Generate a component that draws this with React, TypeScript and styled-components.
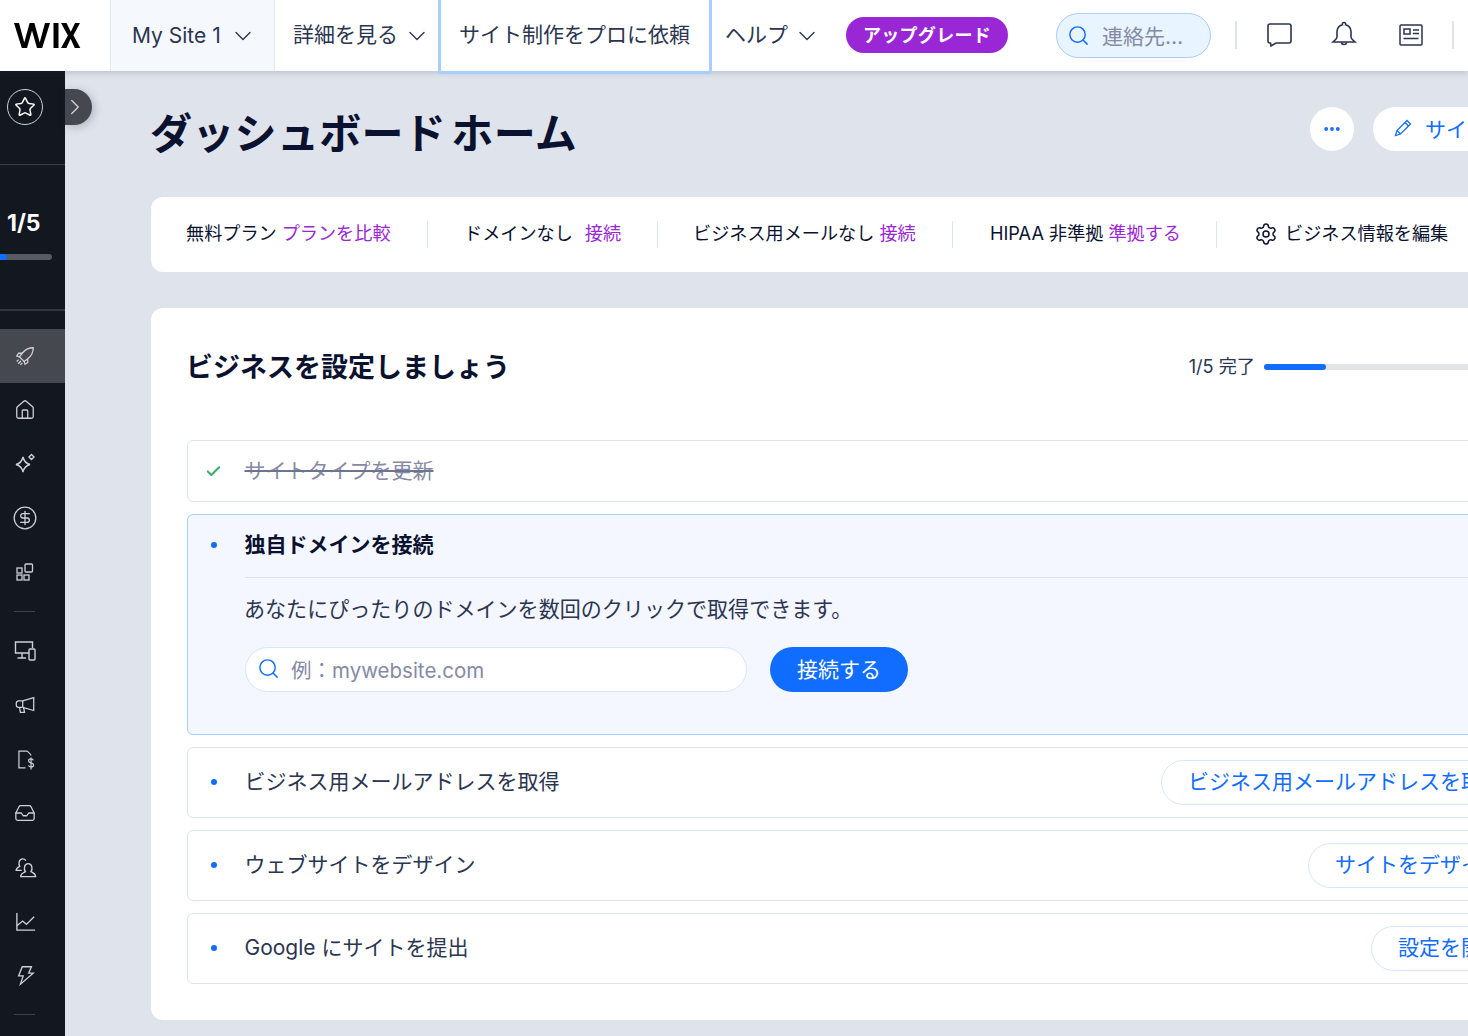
import React from "react";
import styled, { createGlobalStyle } from "styled-components";
import {
  Check,
  ChevronDown,
  ChevronRight,
  CircleDollarSign,
  Ellipsis,
  Home,
  Inbox,
  Search,
  Settings,
  Star,
} from "lucide-react";

const ink = "#0a1230";
const blue = "#116dff";
const purple = "#9a27d5";
const fontStack = `Inter, "Noto Sans CJK JP", sans-serif`;

const GlobalStyle = createGlobalStyle`
  html, body {
    margin: 0;
    height: 1036px;
    overflow: hidden;
    background: #dfe3ec;
    font-family: ${fontStack};
    color: ${ink};
  }
  * { box-sizing: border-box; }
  svg { flex: none; }
`;

const Shell = styled.div`
  width: 1468px;
  height: 1036px;
  overflow: hidden;
  position: relative;
`;

const Header = styled.header`
  height: 71px;
  display: flex;
  background: #fff;
  box-shadow: 0 2px 6px rgba(22, 45, 61, 0.18);
  position: relative;
  z-index: 2;
`;

const LogoCell = styled.div`
  width: 110px;
  padding-left: 14px;
  display: flex;
  align-items: center;
`;

const SiteTab = styled.div`
  width: 165px;
  background: #f5f9fe;
  border-left: 1px solid #e4e8ef;
  border-right: 1px solid #e4e8ef;
  padding-left: 21px;
  display: flex;
  align-items: center;
  gap: 8px;
  font-size: 21px;
  color: #2b3550;
`;

const NavMenu = styled.div<{ $width: number; $pad: number }>`
  width: ${(p) => p.$width}px;
  padding-left: ${(p) => p.$pad}px;
  display: flex;
  align-items: center;
  gap: 5px;
  font-size: 21px;
  color: #2b3550;
  white-space: nowrap;
`;

const NavLabel = styled.span`
  margin-bottom: 6px;
`;

const FocusedNav = styled.div`
  width: 274px;
  height: 77px;
  margin-top: -3px;
  padding: 0 0 6px 18px;
  border: 3px solid #a8cdff;
  border-radius: 0 0 4px 4px;
  background: #fff;
  display: flex;
  align-items: center;
  font-size: 21px;
  color: #2b3550;
  white-space: nowrap;
`;

const UpgradeButton = styled.div`
  width: 162px;
  height: 36px;
  margin: 17px 48px 0 0;
  padding-bottom: 2px;
  border-radius: 18px;
  background: ${purple};
  color: #fff;
  font-size: 18px;
  font-weight: 700;
  letter-spacing: 0.3px;
  display: flex;
  align-items: center;
  justify-content: center;
`;

const SearchBox = styled.div`
  width: 155px;
  height: 45px;
  margin-top: 13px;
  border: 1px solid #a8cdff;
  border-radius: 23px;
  background: #e8f4ff;
  padding-left: 10px;
  display: flex;
  align-items: center;
  gap: 12px;
  font-size: 21px;
  color: #868aa5;
  white-space: nowrap;
`;

const SearchLabel = styled.span`
  margin-bottom: 2px;
`;

const HeaderRule = styled.div<{ $left: number }>`
  width: 2px;
  height: 28px;
  margin: 21px 0 0 ${(p) => p.$left}px;
  background: #dfe3ec;
`;

const HeaderIcon = styled.div<{ $left: number }>`
  width: 30px;
  height: 71px;
  margin-left: ${(p) => p.$left}px;
  padding-bottom: 2px;
  display: flex;
  align-items: center;
  justify-content: center;
  color: #2b3550;
`;

const Body = styled.div`
  height: 965px;
  display: flex;
`;

const Sidebar = styled.aside`
  width: 65px;
  flex: none;
  background: #131720;
  color: #cfd1d6;
  position: relative;
`;

const StarBlock = styled.div`
  height: 94px;
  padding: 18px 0 0 7px;
  border-bottom: 1px solid #3a3d45;
`;

const StarCircle = styled.div`
  width: 36px;
  height: 36px;
  border-radius: 50%;
  border: 1px solid #cfd1d6;
  color: #fff;
  display: flex;
  align-items: center;
  justify-content: center;
`;

const ProgressBlock = styled.div`
  height: 146px;
  padding-top: 44px;
  border-bottom: 2px solid #33363e;
`;

const ProgressLabel = styled.div`
  padding-left: 7px;
  color: #fff;
  font-size: 23px;
  line-height: 28px;
  font-weight: 700;
`;

const SideTrack = styled.div`
  width: 52px;
  height: 6px;
  margin-top: 17px;
  border-radius: 0 3px 3px 0;
  background: #565a63;
`;

const SideFill = styled.div`
  height: 100%;
  border-radius: 0 3px 3px 0;
  background: ${blue};
`;

const SideItems = styled.nav`
  padding-top: 18px;
`;

const SideItem = styled.div<{ $active?: boolean }>`
  height: 54px;
  padding-right: 15px;
  display: flex;
  align-items: center;
  justify-content: center;
  background: ${(p) => (p.$active ? "#45484f" : "transparent")};
`;

const SideRule = styled.div`
  width: 21px;
  height: 1px;
  margin: 12px 0 12px 14px;
  background: #3f4249;
`;

const Toggle = styled.div`
  position: absolute;
  left: 65px;
  top: 18px;
  width: 27px;
  height: 36px;
  padding-right: 7px;
  border-radius: 0 18px 18px 0;
  background: #45484f;
  color: #d4d5d8;
  box-shadow: 2px 2px 8px rgba(22, 45, 61, 0.25);
  display: flex;
  align-items: center;
  justify-content: center;
`;

const Main = styled.main`
  width: 1459px;
  flex: none;
  margin-left: 86px;
`;

const TitleRow = styled.div`
  height: 126px;
  display: flex;
  align-items: flex-start;
`;

const Title = styled.h1`
  margin: 32px auto 0 -1px;
  font-size: 42px;
  line-height: 62px;
  font-weight: 700;
  letter-spacing: 0.3px;
  word-spacing: -5px;
  white-space: nowrap;
`;

const MoreButton = styled.div`
  width: 44px;
  height: 44px;
  margin: 36px 19px 0 0;
  border-radius: 50%;
  background: #fff;
  color: ${blue};
  display: flex;
  align-items: center;
  justify-content: center;
`;

const EditButton = styled.div`
  width: 237px;
  height: 44px;
  margin-top: 36px;
  padding: 0 0 2px 20px;
  border-radius: 22px;
  background: #fff;
  color: ${blue};
  font-size: 21px;
  display: flex;
  align-items: center;
  gap: 12px;
  white-space: nowrap;
`;

const Banner = styled.section`
  height: 75px;
  border-radius: 12px;
  background: #fff;
  display: flex;
  align-items: center;
  font-size: 18.15px;
  white-space: nowrap;
`;

const BannerCell = styled.div<{ $width: number; $pad: number }>`
  width: ${(p) => p.$width}px;
  margin-bottom: 5px;
  padding-left: ${(p) => p.$pad}px;
  display: flex;
  align-items: center;
`;

const BannerRule = styled.div`
  width: 1px;
  height: 27px;
  background: #dfe3ec;
  flex: none;
`;

const BannerLink = styled.span<{ $gap: number }>`
  margin-left: ${(p) => p.$gap}px;
  color: ${purple};
`;

const GearSlot = styled.span`
  margin: 3px 7px 0 0;
  display: flex;
`;

const Card = styled.section`
  height: 712px;
  margin-top: 36px;
  padding: 36px;
  border-radius: 12px;
  background: #fff;
`;

const CardHead = styled.div`
  height: 96px;
  display: flex;
  align-items: flex-start;
`;

const CardTitle = styled.h2`
  margin: 2px auto 0 -1px;
  font-size: 27px;
  line-height: 44px;
  font-weight: 700;
  white-space: nowrap;
`;

const ProgressText = styled.span`
  margin-top: 9px;
  font-size: 18.15px;
  line-height: 26px;
  color: #2b3550;
`;

const Track = styled.div`
  width: 310px;
  height: 6px;
  margin: 20px 0 0 9px;
  border-radius: 3px;
  background: #e3e4e8;
`;

const TrackFill = styled.div`
  height: 100%;
  border-radius: 3px;
  background: ${blue};
`;

const Steps = styled.div`
  display: flex;
  flex-direction: column;
  gap: 12px;
`;

const Step = styled.div<{ $height: number }>`
  height: ${(p) => p.$height}px;
  border: 1px solid #dfe3ec;
  border-radius: 6px;
  padding: 0 44px 0 0;
  display: flex;
  align-items: center;
  font-size: 21px;
`;

const OpenStep = styled.div`
  height: 221px;
  border: 1px solid #a8cdff;
  border-radius: 6px;
  background: #f4f7ff;
`;

const Marker = styled.div`
  width: 56.5px;
  flex: none;
  padding-left: 17px;
  display: flex;
  align-items: center;
`;

const Dot = styled.span`
  width: 6px;
  height: 6px;
  margin: -2px 0 0 6px;
  border-radius: 50%;
  background: ${blue};
`;

const DoneText = styled.span`
  margin-bottom: 4px;
  color: #868aa5;
  text-decoration: line-through;
  text-decoration-color: #6e7490;
`;

const StepLabel = styled.span`
  margin: 0 auto 6px 0;
  color: #2b3550;
`;

const OutlineButton = styled.div`
  height: 45px;
  padding: 0 25px 6px 26px;
  border: 1px solid #d6e6fe;
  border-radius: 23px;
  color: ${blue};
  font-size: 21px;
  display: flex;
  align-items: center;
  white-space: nowrap;
`;

const OpenHead = styled.div`
  height: 62px;
  display: flex;
  align-items: center;
  font-size: 21px;
  font-weight: 700;
`;

const OpenTitle = styled.span`
  margin-bottom: 7px;
`;

const OpenBody = styled.div`
  margin-left: 57px;
  border-top: 1px solid #dfe3ec;
`;

const OpenText = styled.p`
  margin: 17px 0 0 -1px;
  font-size: 21.05px;
  line-height: 30px;
  color: #2b3550;
  white-space: nowrap;
`;

const DomainRow = styled.div`
  margin-top: 22px;
  display: flex;
  gap: 23px;
`;

const DomainInput = styled.div`
  width: 502px;
  height: 45px;
  padding: 0 0 2px 11px;
  border: 1px solid #d6e6fe;
  border-radius: 23px;
  background: #fff;
  color: #868aa5;
  font-size: 20.5px;
  display: flex;
  align-items: center;
  gap: 11px;
`;

const ConnectButton = styled.div`
  width: 138px;
  height: 45px;
  padding-bottom: 4px;
  border-radius: 23px;
  background: ${blue};
  color: #fff;
  font-size: 21px;
  display: flex;
  align-items: center;
  justify-content: center;
`;

const WixLogo = () => (
  <svg width="67" height="25" viewBox="0 0 67 25" fill="#000">
    <polygon points="0,0 5,0 10.3,19.5 15.6,0 20.4,0 25.7,19.5 31,0 36,0 28.2,25 23,25 18,7.5 13,25 7.8,25" />
    <rect x="39.5" y="0" width="5" height="25" />
    <polygon points="47,0 52.5,0 56.8,8.8 61,0 66,0 59.4,12.2 66.3,25 60.8,25 56.6,15.8 52.4,25 47,25 53.9,12.4" />
  </svg>
);

const ChatIcon = () => (
  <svg width="27" height="27" viewBox="0 0 27 27" fill="none" stroke="currentColor" strokeWidth="1.6">
    <path d="M4 3h19a2 2 0 0 1 2 2v15a2 2 0 0 1-2 2H10l-5 3-.5-3H4a2 2 0 0 1-2-2V5a2 2 0 0 1 2-2Z" />
  </svg>
);

const BellIcon = () => (
  <svg width="26" height="27" viewBox="0 0 26 27" fill="none" stroke="currentColor" strokeWidth="1.6">
    <path d="M13 1.5a1.6 1.6 0 0 1 1.6 2.2C18 4.6 20 7.5 20 11v5c0 2 2.5 3.6 4 5H2c1.5-1.4 4-3 4-5v-5c0-3.5 2-6.4 5.4-7.3A1.6 1.6 0 0 1 13 1.5Z" />
    <path d="M10.5 21a2.5 2.5 0 0 0 5 0" />
  </svg>
);

const NewsIcon = () => (
  <svg width="24" height="24" viewBox="0 0 24 24" fill="none" stroke="currentColor" strokeWidth="1.5">
    <rect x="1" y="2" width="22" height="20" rx="1" />
    <rect x="5" y="6" width="6" height="5" />
    <path d="M14 7h6M14 10.5h6M4.5 15.5h15" />
  </svg>
);

const PencilIcon = () => (
  <svg width="20" height="20" viewBox="0 0 20 20" fill="none" stroke="currentColor" strokeWidth="1.3">
    <path d="M14 2.5l3.5 3.5L7.5 16l-5 1.5L4 12.5Z" />
    <path d="M12 4.5l3.5 3.5M4 12.5l3.5 3.5" />
  </svg>
);

const SideSvg = styled.svg.attrs({
  viewBox: "0 0 24 24",
  fill: "none",
  stroke: "currentColor",
})<{ $size?: number }>`
  width: ${(p) => p.$size ?? 22}px;
  height: ${(p) => p.$size ?? 22}px;
  stroke-width: 1.4;
`;

const RocketIcon = () => (
  <SideSvg>
    <path d="M21 3c-5 0-9 2-12 6l-3 4 5 5 4-3c4-3 6-7 6-12Z" />
    <path d="M9 9H5l-2 3 3.5 1M15 15v4l-3 2-1-3.5" />
    <path d="M3 18l2-2M4.5 20.5l3-3M7 21.5l2-2" />
  </SideSvg>
);

const SparkleIcon = () => (
  <SideSvg $size={24}>
    <path d="M10 5c1 4.5 3 6.5 7 7.5-4 1-6 3-7 7.5-1-4.5-3-6.5-7-7.5 4-1 6-3 7-7.5Z" />
    <path d="M18.5 2.5 21 5l-2.5 2.5L16 5Z" />
  </SideSvg>
);

const AppsIcon = () => (
  <svg width="20" height="20" viewBox="0 0 20 20" fill="none" stroke="currentColor" strokeWidth="1.3">
    <rect x="2" y="6" width="5" height="5" />
    <rect x="2" y="13" width="5" height="5" />
    <rect x="9" y="13" width="5" height="5" />
    <rect x="10" y="2" width="7.5" height="8" rx="1" />
  </svg>
);

const DevicesIcon = () => (
  <SideSvg $size={24}>
    <path d="M16 14H2.5V3h17v6" />
    <path d="M9 14v5M4.5 19H13" />
    <rect x="16" y="10" width="6" height="11" rx="1" />
  </SideSvg>
);

const MegaphoneIcon = () => (
  <SideSvg>
    <path d="M21.5 4v14l-12-3.5H5a2.5 2.5 0 0 1-2.5-2.5v-2A2.5 2.5 0 0 1 5 7.5h4.5Z" />
    <path d="M9.5 7.5v7M6 14.5l1 5.5h4.5l-1-5" />
  </SideSvg>
);

const BillIcon = () => (
  <SideSvg $size={21}>
    <path d="M14 2.5H4.5v19H12" />
    <path d="M14 2.5l4 4v1" />
    <path d="M21 13c-.4-1.2-1.4-1.8-2.7-1.8-1.6 0-2.8.9-2.8 2.3s1.1 2 2.8 2.4 2.9 1 2.9 2.4-1.3 2.3-2.9 2.3c-1.4 0-2.5-.7-2.9-1.9M18.3 9.6v13.8" />
  </SideSvg>
);

const PeopleIcon = () => (
  <SideSvg $size={23}>
    <path d="M8 15H2.2c0-2.6 2.2-3.4 3.8-4.2-1.4-2-1.2-7.8 3-7.8 1.6 0 2.7.7 3.3 1.8" />
    <path d="M7 21.5h15.5c0-3.4-2.6-3.8-4.8-5.2 1.8-2.2 1.6-8.3-2.9-8.3s-4.7 6.1-2.9 8.3C10 17.7 7 18.1 7 21.5Z" />
  </SideSvg>
);

const TrendIcon = () => (
  <SideSvg $size={23}>
    <path d="M3 3v18h19" />
    <path d="M3 16.5l6-5 4 3.5 8-8" />
  </SideSvg>
);

const BoltIcon = () => (
  <SideSvg>
    <path d="M9 3h10l-3 7h5L7 22l3-9H5Z" />
  </SideSvg>
);

export default function App() {
  return (
    <Shell>
      <GlobalStyle />
      <Header>
        <LogoCell>
          <WixLogo />
        </LogoCell>
        <SiteTab>
          My Site 1
          <ChevronDown size={28} strokeWidth={1.2} />
        </SiteTab>
        <NavMenu $width={163} $pad={18}>
          <NavLabel>詳細を見る</NavLabel>
          <ChevronDown size={28} strokeWidth={1.2} />
        </NavMenu>
        <FocusedNav>サイト制作をプロに依頼</FocusedNav>
        <NavMenu $width={134} $pad={13}>
          <NavLabel>ヘルプ</NavLabel>
          <ChevronDown size={28} strokeWidth={1.2} />
        </NavMenu>
        <UpgradeButton>アップグレード</UpgradeButton>
        <SearchBox>
          <Search size={23} strokeWidth={1.5} color={blue} />
          <SearchLabel>連絡先…</SearchLabel>
        </SearchBox>
        <HeaderRule $left={24} />
        <HeaderIcon $left={27}>
          <ChatIcon />
        </HeaderIcon>
        <HeaderIcon $left={35}>
          <BellIcon />
        </HeaderIcon>
        <HeaderIcon $left={37}>
          <NewsIcon />
        </HeaderIcon>
        <HeaderRule $left={26} />
      </Header>
      <Body>
        <Sidebar>
          <StarBlock>
            <StarCircle>
              <Star size={22} strokeWidth={1.6} />
            </StarCircle>
          </StarBlock>
          <ProgressBlock>
            <ProgressLabel>1/5</ProgressLabel>
            <SideTrack>
              <SideFill style={{ width: "13%" }} />
            </SideTrack>
          </ProgressBlock>
          <SideItems>
            <SideItem $active>
              <RocketIcon />
            </SideItem>
            <SideItem>
              <Home size={22} strokeWidth={1.4} />
            </SideItem>
            <SideItem>
              <SparkleIcon />
            </SideItem>
            <SideItem>
              <CircleDollarSign size={26} strokeWidth={1.2} />
            </SideItem>
            <SideItem>
              <AppsIcon />
            </SideItem>
            <SideRule />
            <SideItem>
              <DevicesIcon />
            </SideItem>
            <SideItem>
              <MegaphoneIcon />
            </SideItem>
            <SideItem>
              <BillIcon />
            </SideItem>
            <SideItem>
              <Inbox size={22} strokeWidth={1.4} />
            </SideItem>
            <SideItem>
              <PeopleIcon />
            </SideItem>
            <SideItem>
              <TrendIcon />
            </SideItem>
            <SideItem>
              <BoltIcon />
            </SideItem>
            <SideRule />
          </SideItems>
          <Toggle>
            <ChevronRight size={26} strokeWidth={1.2} />
          </Toggle>
        </Sidebar>
        <Main>
          <TitleRow>
            <Title>ダッシュボード ホーム</Title>
            <MoreButton>
              <Ellipsis size={20} strokeWidth={2.6} />
            </MoreButton>
            <EditButton>
              <PencilIcon />
              サイトを編集
            </EditButton>
          </TitleRow>
          <Banner>
            <BannerCell $width={276} $pad={35}>
              無料プラン
              <BannerLink $gap={5}>プランを比較</BannerLink>
            </BannerCell>
            <BannerRule />
            <BannerCell $width={229} $pad={36}>
              ドメインなし
              <BannerLink $gap={12}>接続</BannerLink>
            </BannerCell>
            <BannerRule />
            <BannerCell $width={294} $pad={35}>
              ビジネス用メールなし
              <BannerLink $gap={5}>接続</BannerLink>
            </BannerCell>
            <BannerRule />
            <BannerCell $width={263} $pad={37}>
              HIPAA 非準拠
              <BannerLink $gap={5}>準拠する</BannerLink>
            </BannerCell>
            <BannerRule />
            <BannerCell $width={300} $pad={37}>
              <GearSlot>
                <Settings size={24} strokeWidth={1.5} />
              </GearSlot>
              ビジネス情報を編集
            </BannerCell>
          </Banner>
          <Card>
            <CardHead>
              <CardTitle>ビジネスを設定しましょう</CardTitle>
              <ProgressText>1/5 完了</ProgressText>
              <Track>
                <TrackFill style={{ width: "20%" }} />
              </Track>
            </CardHead>
            <Steps>
              <Step $height={62}>
                <Marker>
                  <Check size={17} strokeWidth={3} color="#3fb06c" />
                </Marker>
                <DoneText>サイトタイプを更新</DoneText>
              </Step>
              <OpenStep>
                <OpenHead>
                  <Marker>
                    <Dot />
                  </Marker>
                  <OpenTitle>独自ドメインを接続</OpenTitle>
                </OpenHead>
                <OpenBody>
                  <OpenText>あなたにぴったりのドメインを数回のクリックで取得できます。</OpenText>
                  <DomainRow>
                    <DomainInput>
                      <Search size={23} strokeWidth={1.5} color={blue} />
                      例：mywebsite.com
                    </DomainInput>
                    <ConnectButton>接続する</ConnectButton>
                  </DomainRow>
                </OpenBody>
              </OpenStep>
              <Step $height={71}>
                <Marker>
                  <Dot />
                </Marker>
                <StepLabel>ビジネス用メールアドレスを取得</StepLabel>
                <OutlineButton>ビジネス用メールアドレスを取得</OutlineButton>
              </Step>
              <Step $height={71}>
                <Marker>
                  <Dot />
                </Marker>
                <StepLabel>ウェブサイトをデザイン</StepLabel>
                <OutlineButton>サイトをデザイン</OutlineButton>
              </Step>
              <Step $height={71}>
                <Marker>
                  <Dot />
                </Marker>
                <StepLabel>Google にサイトを提出</StepLabel>
                <OutlineButton>設定を開く</OutlineButton>
              </Step>
            </Steps>
          </Card>
        </Main>
      </Body>
    </Shell>
  );
}
